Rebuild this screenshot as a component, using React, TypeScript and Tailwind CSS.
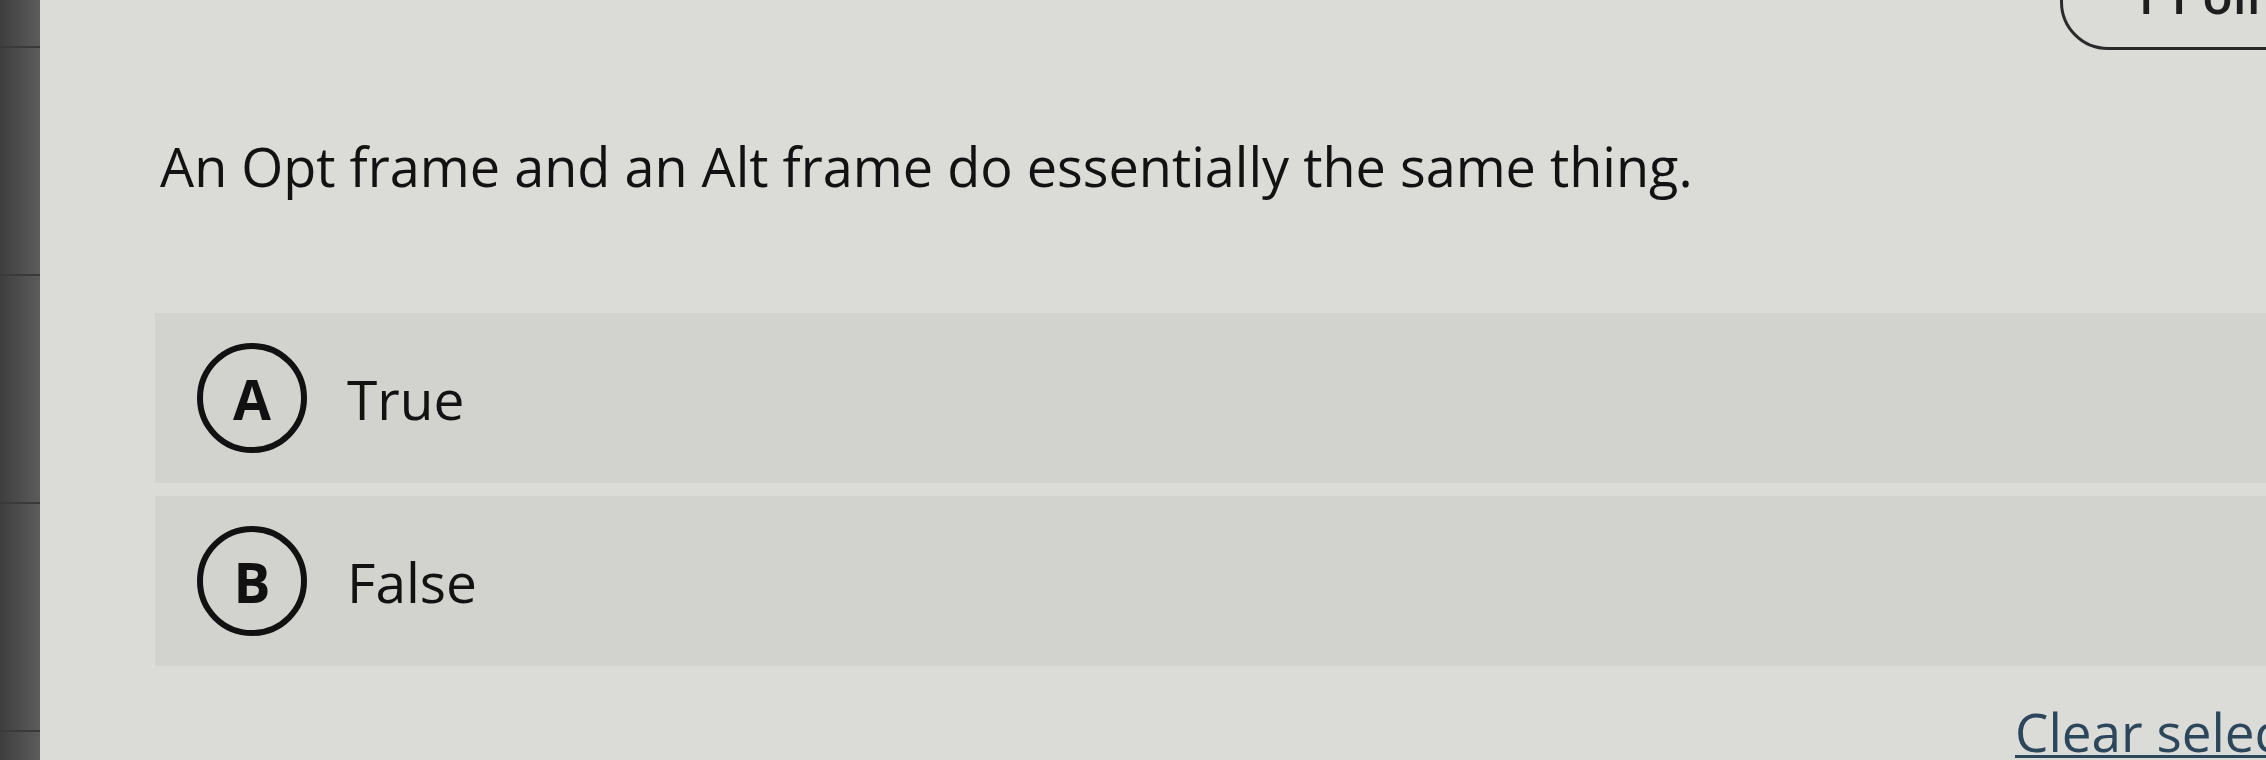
import React from "react";

const font = { fontFamily: '"Open Sans", "Noto Sans", sans-serif' };

function Choice({ letter, label }: { letter: string; label: string }) {
  return (
    <div className="flex h-[170px] items-center bg-[#d2d2cf] pl-[42px]">
      <div className="flex h-[110px] w-[110px] shrink-0 items-center justify-center rounded-full border-[6px] border-[#111111]">
        <span className="text-[55px] font-bold leading-none text-[#111111]">{letter}</span>
      </div>
      <span className="ml-[40px] text-[55px] leading-none text-[#121212]">{label}</span>
    </div>
  );
}

export default function App() {
  return (
    <div className="flex h-[760px] w-[2266px] overflow-hidden bg-[#dadad7]" style={font}>
      {/* side gutter */}
      <div className="flex w-[40px] shrink-0 flex-col bg-gradient-to-r from-[#3e3e3e] to-[#5c5c5c]">
        <div className="h-[48px] border-b-2 border-[#3a3a3a]" />
        <div className="h-[228px] border-b-2 border-[#3a3a3a]" />
        <div className="h-[228px] border-b-2 border-[#3a3a3a]" />
        <div className="h-[228px] border-b-2 border-[#3a3a3a]" />
      </div>

      <div className="flex min-w-0 flex-1 flex-col bg-[#dbdbd8] pl-[115px]">
        {/* header with points pill */}
        <div className="flex h-[50px] shrink-0 justify-start pl-[1905px]">
          <div className="mt-[-60px] flex h-[110px] w-[300px] shrink-0 items-end rounded-[48px] border-[3px] border-[#2a2a2a] pb-[27px] pl-[67px]">
            <span className="text-[50px] font-semibold leading-none text-[#1e1e1e]">1 Point</span>
          </div>
        </div>

        <p className="mt-[89px] pl-[5px] text-[54px] leading-none text-[#121212]">
          An Opt frame and an Alt frame do essentially the same thing.
        </p>

        <div className="mt-[120px] flex flex-col gap-[13px]">
          <Choice letter="A" label="True" />
          <Choice letter="B" label="False" />
        </div>

        <div className="mt-[39px] pl-[1860px]">
          <span className="whitespace-nowrap text-[53px] leading-none text-[#2c465c] underline decoration-[3px] underline-offset-[3px]">
            Clear selection
          </span>
        </div>
      </div>
    </div>
  );
}
